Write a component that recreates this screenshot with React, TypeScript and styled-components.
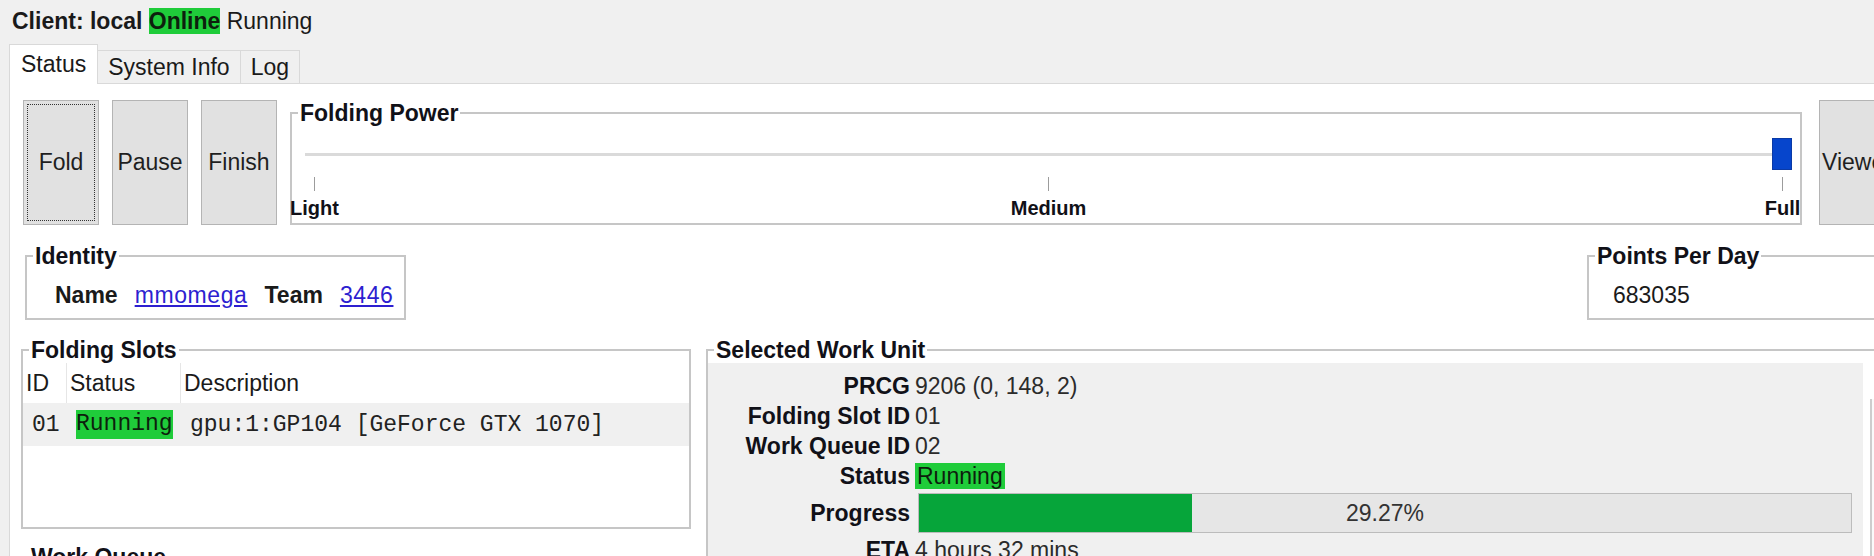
import React from 'react'
import styled, { createGlobalStyle } from 'styled-components'

const GlobalStyle = createGlobalStyle`
  html, body {
    margin: 0;
    padding: 0;
  }
  body {
    width: 1874px;
    height: 556px;
    overflow: hidden;
    background: #f0f0f0;
    font-family: 'Liberation Sans', Arial, sans-serif;
    font-size: 23px;
    color: #1a1a1a;
  }
`

const Window = styled.div`
  width: 1874px;
  height: 556px;
  overflow: hidden;
  background: #f0f0f0;
`

const ClientBar = styled.div`
  padding: 8px 0 0 12px;
  height: 26px;
  line-height: 26px;
  white-space: nowrap;
`

const Bold = styled.span`
  font-weight: 700;
`

const Highlight = styled.span<{ $bold?: boolean; $mono?: boolean }>`
  display: inline-block;
  background: #1fcc3a;
  color: #0d1f0d;
  line-height: ${p => (p.$mono ? '29px' : '26px')};
  font-weight: ${p => (p.$bold ? 700 : 400)};
  padding: 0 ${p => (p.$bold || p.$mono ? 0 : 2)}px;
`

const TabBar = styled.div`
  position: relative;
  z-index: 1;
  display: flex;
  align-items: flex-end;
  height: 39px;
  margin: 10px 0 0 9px;
`

const Tab = styled.div<{ $active?: boolean }>`
  box-sizing: border-box;
  display: flex;
  align-items: center;
  height: ${p => (p.$active ? '40px' : '33px')};
  margin-bottom: ${p => (p.$active ? '-1px' : '0')};
  padding: 0 ${p => (p.$active ? 11 : 10)}px;
  background: ${p => (p.$active ? '#ffffff' : '#f0f0f0')};
  border: 1px solid #d9d9d9;
  border-bottom: none;
  white-space: nowrap;

  & + & {
    margin-left: -1px;
  }
`

const Pane = styled.div`
  margin-left: 9px;
  height: 472px;
  overflow: hidden;
  background: #ffffff;
  border-top: 1px solid #d9d9d9;
  border-left: 1px solid #d9d9d9;
`

const PaneBody = styled.div`
  box-sizing: border-box;
  width: 1872px;
  padding: 16px 0 0 11px;
  display: flex;
  flex-direction: column;
`

const ControlRow = styled.div`
  display: flex;
  align-items: flex-start;
  gap: 13px;
  margin-left: 2px;
`

const ActionButton = styled.button<{ $focused?: boolean; $offset?: number }>`
  flex: none;
  width: 76px;
  height: 125px;
  margin: 0 0 0 ${p => p.$offset || 0}px;
  padding: 0;
  background: #e1e1e1;
  border: 1px solid #b4b4b4;
  font-family: inherit;
  font-size: 23px;
  color: #1f1f1f;
  white-space: nowrap;
  outline: ${p => (p.$focused ? '1px dotted #333' : 'none')};
  outline-offset: -5px;
`

const Group = styled.fieldset<{ $width?: number; $grow?: boolean; $push?: boolean; $offset?: number }>`
  box-sizing: border-box;
  flex: ${p => (p.$grow ? '1' : 'none')};
  width: ${p => (p.$width ? `${p.$width}px` : 'auto')};
  min-width: 0;
  margin: 0 0 0 ${p => (p.$push ? 'auto' : `${p.$offset || 0}px`)};
  padding: 0;
  border: 2px solid #c6c6c6;
`

const Legend = styled.legend`
  margin-left: 6px;
  padding: 0 2px;
  font-size: 23px;
  line-height: 26px;
  font-weight: 700;
  color: #111118;
`

const Slider = styled.div`
  padding: 12px 17px 4px 22px;
`

const TrackArea = styled.div`
  position: relative;
  height: 32px;
  display: flex;
  align-items: center;
`

const TrackLine = styled.div`
  flex: 1;
  height: 3px;
  margin: 0 -7px 0 -9px;
  background: #dadada;
`

const Thumb = styled.div`
  position: absolute;
  top: 0;
  box-sizing: border-box;
  width: 20px;
  height: 32px;
  background: #0645cc;
  border: 1px solid #0a3aa6;
`

const Scale = styled.div`
  display: flex;
  justify-content: space-between;
  margin-top: 7px;
`

const Stop = styled.div`
  width: 1px;
  display: flex;
  flex-direction: column;
  align-items: center;
`

const Tick = styled.div`
  width: 1px;
  height: 14px;
  background: #9c9c9c;
`

const StopLabel = styled.div`
  margin-top: 6px;
  font-size: 20px;
  line-height: 22px;
  font-weight: 700;
  color: #111118;
  white-space: nowrap;
`

const InfoRow = styled.div`
  display: flex;
  align-items: flex-start;
  margin-top: 18px;
`

const GroupLine = styled.div<{ $indent: number }>`
  display: flex;
  gap: 17px;
  padding: 13px 0 10px ${p => p.$indent}px;
  line-height: 26px;
  white-space: nowrap;
`

const Link = styled.a`
  color: #2d1fd0;
  text-decoration: underline;
  letter-spacing: 0.6px;
`

const WorkRow = styled.div`
  display: flex;
  align-items: flex-start;
  gap: 15px;
  margin-top: 17px;
`

const LeftColumn = styled.div`
  flex: none;
  width: 670px;
  display: flex;
  flex-direction: column;
`

const SlotList = styled.div`
  height: 164px;
  background: #ffffff;
`

const SlotGrid = styled.div<{ $selected?: boolean }>`
  display: grid;
  grid-template-columns: 44px 114px 1fr;
  align-items: center;
  height: ${p => (p.$selected ? '43px' : '40px')};
  background: ${p => (p.$selected ? '#f0f0f0' : 'transparent')};
`

const HeadCell = styled.div<{ $sep?: boolean }>`
  height: 100%;
  line-height: 40px;
  padding-left: 3px;
  border-right: ${p => (p.$sep ? '1px solid #e6e6e6' : 'none')};
  white-space: nowrap;
`

const MonoCell = styled.div`
  padding-left: 9px;
  font-family: 'Liberation Mono', 'Courier New', monospace;
  font-size: 23px;
  color: #222;
  white-space: nowrap;
`

const QueueGroup = styled(Group)`
  margin-top: 15px;
  height: 200px;
`

const UnitBody = styled.div`
  display: flex;
  height: 300px;
`

const PropPanel = styled.div`
  flex: 1;
  display: grid;
  grid-template-columns: 202px 1fr;
  column-gap: 5px;
  align-content: start;
  padding: 8px 11px 0 0;
  background: #f0f0f0;
`

const PropLabel = styled.div<{ $tall?: boolean }>`
  text-align: right;
  font-weight: 700;
  color: #111118;
  line-height: ${p => (p.$tall ? '44px' : '30px')};
  white-space: nowrap;
`

const PropValue = styled.div<{ $tall?: boolean }>`
  display: flex;
  align-items: center;
  height: ${p => (p.$tall ? '44px' : '30px')};
  line-height: 30px;
  color: #2b2b2b;
  white-space: nowrap;
`

const Progress = styled.div`
  position: relative;
  flex: 1;
  height: 40px;
  margin-left: 3px;
  box-sizing: border-box;
  background: #e6e6e6;
  border: 1px solid #bcbcbc;
  display: flex;
  align-items: center;
  justify-content: center;
`

const ProgressFill = styled.div`
  position: absolute;
  left: 0;
  top: 0;
  bottom: 0;
  background: #06a53a;
`

const ProgressText = styled.span`
  position: relative;
  color: #333;
`

const Scrollbar = styled.div`
  flex: none;
  width: 17px;
  box-sizing: border-box;
  padding: 36px 0 0 7px;
  background: #ffffff;
`

const ScrollThumb = styled.div`
  height: 100%;
  border-left: 2px solid #cdcdcd;
  background: #fafafa;
`

const workUnit = [
  { label: 'PRCG', value: '9206 (0, 148, 2)' },
  { label: 'Folding Slot ID', value: '01' },
  { label: 'Work Queue ID', value: '02' },
  { label: 'Status', value: 'Running', badge: true },
  { label: 'Progress', progress: 29.27 },
  { label: 'ETA', value: '4 hours 32 mins' },
]

export default function App() {
  const power = 100

  return (
    <Window>
      <GlobalStyle />
      <ClientBar>
        <Bold>Client: local </Bold>
        <Highlight $bold>Online</Highlight> Running
      </ClientBar>

      <TabBar>
        <Tab $active>Status</Tab>
        <Tab>System Info</Tab>
        <Tab>Log</Tab>
      </TabBar>

      <Pane>
        <PaneBody>
          <ControlRow>
            <ActionButton $focused>Fold</ActionButton>
            <ActionButton>Pause</ActionButton>
            <ActionButton>Finish</ActionButton>
            <Group $width={1512}>
              <Legend>Folding Power</Legend>
              <Slider>
                <TrackArea>
                  <TrackLine />
                  <Thumb style={{ left: `calc(${power}% - 11px)` }} />
                </TrackArea>
                <Scale>
                  {['Light', 'Medium', 'Full'].map(name => (
                    <Stop key={name}>
                      <Tick />
                      <StopLabel>{name}</StopLabel>
                    </Stop>
                  ))}
                </Scale>
              </Slider>
            </Group>
            <ActionButton $offset={4}>Viewer</ActionButton>
          </ControlRow>

          <InfoRow>
            <Group $width={381} $offset={4}>
              <Legend>Identity</Legend>
              <GroupLine $indent={28}>
                <Bold>Name</Bold>
                <Link href="#">mmomega</Link>
                <Bold>Team</Bold>
                <Link href="#">3446</Link>
              </GroupLine>
            </Group>
            <Group $width={295} $push>
              <Legend>Points Per Day</Legend>
              <GroupLine $indent={24}>683035</GroupLine>
            </Group>
          </InfoRow>

          <WorkRow>
            <LeftColumn>
              <Group>
                <Legend>Folding Slots</Legend>
                <SlotList>
                  <SlotGrid>
                    <HeadCell $sep>ID</HeadCell>
                    <HeadCell $sep>Status</HeadCell>
                    <HeadCell>Description</HeadCell>
                  </SlotGrid>
                  <SlotGrid $selected>
                    <MonoCell>01</MonoCell>
                    <MonoCell>
                      <Highlight $mono>Running</Highlight>
                    </MonoCell>
                    <MonoCell>gpu:1:GP104 [GeForce GTX 1070]</MonoCell>
                  </SlotGrid>
                </SlotList>
              </Group>
              <QueueGroup>
                <Legend>Work Queue</Legend>
              </QueueGroup>
            </LeftColumn>

            <Group $grow>
              <Legend>Selected Work Unit</Legend>
              <UnitBody>
                <PropPanel>
                  {workUnit.map(row => (
                    <React.Fragment key={row.label}>
                      <PropLabel $tall={row.progress !== undefined}>{row.label}</PropLabel>
                      <PropValue $tall={row.progress !== undefined}>
                        {row.progress !== undefined ? (
                          <Progress>
                            <ProgressFill style={{ width: `${row.progress}%` }} />
                            <ProgressText>{row.progress.toFixed(2)}%</ProgressText>
                          </Progress>
                        ) : row.badge ? (
                          <Highlight>{row.value}</Highlight>
                        ) : (
                          row.value
                        )}
                      </PropValue>
                    </React.Fragment>
                  ))}
                </PropPanel>
                <Scrollbar>
                  <ScrollThumb />
                </Scrollbar>
              </UnitBody>
            </Group>
          </WorkRow>
        </PaneBody>
      </Pane>
    </Window>
  )
}
